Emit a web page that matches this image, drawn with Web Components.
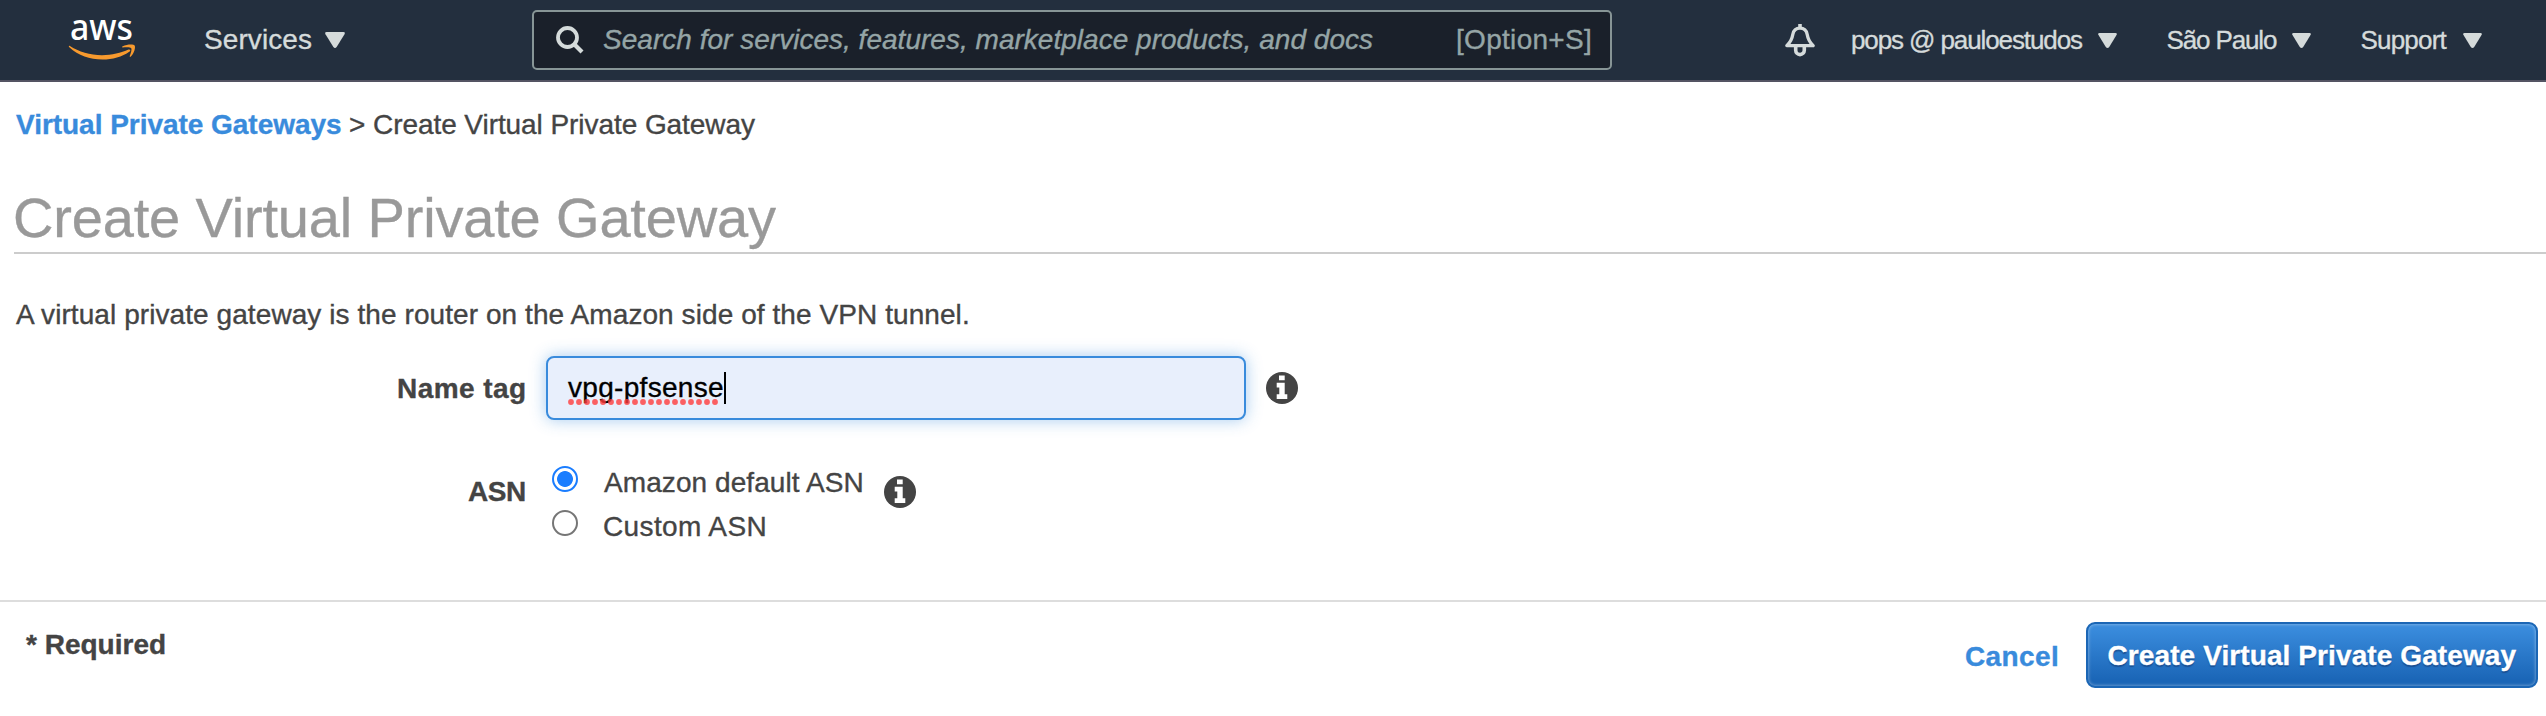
<!DOCTYPE html>
<html lang="en">
<head>
<meta charset="utf-8">
<title>Create Virtual Private Gateway</title>
<style>
html,body{margin:0;padding:0}
body{background:#fff;color:#444;font-family:"Liberation Sans",Arial,sans-serif;font-size:28px;overflow:hidden}
</style>
</head>
<body>
<vpc-page></vpc-page>
<script>
const pen = document.createElement('canvas').getContext('2d');

/* One line of text whose box is exactly its ink width; tracking is derived from the width. */
class InkText extends HTMLElement {
  connectedCallback() {
    const size = +(this.getAttribute('size') || 28);
    const weight = this.getAttribute('weight') || '400';
    const slant = this.hasAttribute('italic') ? 'italic' : 'normal';
    const width = +this.getAttribute('w');
    const text = this.textContent;
    pen.font = `${slant} ${weight} ${size}px "Liberation Sans", Arial, sans-serif`;
    const m = pen.measureText(text);
    const ink = m.actualBoundingBoxRight + m.actualBoundingBoxLeft;
    const track = text.length > 1 ? (width - ink) / (text.length - 1) : 0;
    this.attachShadow({mode: 'open'}).innerHTML = `
      <style>
        :host{display:block;flex:none;width:${width}px;-webkit-text-stroke:.35px currentColor;
          font:${slant} ${weight} ${size}px/${Math.round(size * 8 / 7)}px "Liberation Sans",Arial,sans-serif}
        span{display:block;white-space:pre;margin-left:${m.actualBoundingBoxLeft}px;letter-spacing:${track}px}
      </style><span><slot></slot></span>`;
  }
}
customElements.define('ink-text', InkText);

const define = (name, html) => customElements.define(name, class extends HTMLElement {
  constructor() {
    super();
    this.attachShadow({mode: 'open'}).innerHTML = html;
  }
});

define('caret-down', `
  <style>:host{display:block;flex:none;width:20px;height:16px}svg{display:block;width:100%;height:100%}</style>
  <svg viewBox="0 0 20 16" preserveAspectRatio="none"><path d="M1.6 0H18.4Q20.6 0 19.5 2.2L11.8 14.8Q10 17.2 8.200 14.800L.5 2.200Q-.6 0 1.600 0Z" fill="#d5dbdb"/></svg>`);

define('aws-logo', `
  <style>:host{display:block;flex:none;width:68px;height:42px}svg{display:block;overflow:visible}</style>
  <svg width="68" height="42" viewBox="0 0 68 42">
    <text x="1" y="20.700" font-family="Noto Sans,sans-serif" font-weight="500" font-size="37" textLength="63" lengthAdjust="spacingAndGlyphs" fill="#fff">aws</text>
    <path d="M.5 26.800C10 33 21 36.200 33 36.200C43 36.200 52 34 59.500 30.600C61 30 62 31.600 60.600 32.600C53 38 43.500 40.600 33.500 40.600C20.500 40.600 9.500 36.500 .3 28.300C-.5 27.500-.2 26.500 .5 26.800Z" fill="#f79a2e"/>
    <path d="M53.600 28.600C52.900 28.400 53 27.700 53.700 27.300C57.800 25.200 64.500 25.100 65.600 26.400C66.800 27.900 65.300 34.200 61.800 37.600C61.200 38.200 60.400 37.900 60.700 37.100C61.700 34.600 63.100 30.300 62.200 29.200C61.300 28 56.200 28.400 53.600 28.600Z" fill="#f79a2e"/>
  </svg>`);

define('search-box', `
  <style>
    :host{box-sizing:border-box;display:flex;align-items:center;flex:none;width:1080px;height:60px;border:2px solid #879596;
      border-radius:5px;background:#1a202a;color:#95a5a6;padding:0 20px 0 22px}
    svg{display:block;margin-right:19px}
    .key{margin-left:auto}
  </style>
  <svg width="28" height="28" viewBox="0 0 28 28" fill="none" stroke="#d5dbdb"><circle cx="11.500" cy="11.500" r="9.500" stroke-width="3.800"/><path d="M18.500 18.500L26 26" stroke-width="4.200"/></svg>
  <ink-text italic w="770">Search for services, features, marketplace products, and docs</ink-text>
  <ink-text class="key" w="132">[Option+S]</ink-text>`);

define('console-header', `
  <style>
    :host{box-sizing:border-box;display:flex;align-items:center;height:82px;background:#232f3e;border-bottom:2px solid #545463;color:#d5dbdb;padding-left:69px}
    aws-logo{margin-right:68px}
    .services{margin-right:187px}
    .item{display:flex;align-items:center;gap:14px}
    .services caret-down{margin-top:-1px}
    .bell{display:block;flex:none;margin:0 36px 0 172px}
    .small{gap:15px}
    .small ink-text{margin-top:-1px}
    .small caret-down{width:19px;height:15px}
    .small+.small{margin-left:50.500px}
  </style>
  <aws-logo></aws-logo>
  <div class="item services"><ink-text w="106">Services</ink-text><caret-down></caret-down></div>
  <search-box></search-box>
  <svg class="bell" width="32" height="33" viewBox="0 0 32 33" fill="none" stroke="#d5dbdb"><path d="M16 0V4" stroke-width="3.600"/><path d="M2.800 21.600C6.500 18.200 8.200 14.200 8.800 10.500C9.600 6 12.300 4.200 16 4.200S22.400 6 23.200 10.500C23.800 14.200 25.500 18.200 29.200 21.600Z" stroke-width="3.300" stroke-linejoin="round"/><path d="M11.700 22.500V26.300A4.300 4.300 0 0 0 20.300 26.300V22.500" stroke-width="3.600"/></svg>
  <div class="item small"><ink-text size="26" w="231">pops @ pauloestudos</ink-text><caret-down></caret-down></div>
  <div class="item small"><ink-text size="26" w="109.500">São Paulo</ink-text><caret-down></caret-down></div>
  <div class="item small"><ink-text size="26" w="86">Support</ink-text><caret-down></caret-down></div>`);

define('info-icon', `
  <style>:host{display:block;flex:none;width:32px;height:32px}svg{display:block}</style>
  <svg width="32" height="32" viewBox="0 0 32 32"><circle cx="16" cy="16" r="16" fill="#444"/><path d="M13 3.500H18.700V8.300H13ZM10.700 10.800H18.700V22.300H21.300V27H10.700V22.300H13.300V15.500H10.700Z" fill="#fff"/></svg>`);

define('name-field', `
  <style>
    :host{box-sizing:border-box;display:flex;align-items:center;flex:none;width:700px;height:64px;border:2px solid #398bdc;border-radius:8px;
      background:#e8effc;color:#000;padding-left:20px;box-shadow:0 0 16px rgba(57,139,220,.45)}
    .word{position:relative}
    .dots{position:absolute;left:0;top:27px;display:block}
    .caret{width:2px;height:32px;background:#000;margin-left:1px}
  </style>
  <div class="word"><ink-text w="155">vpg-pfsense</ink-text>
    <svg class="dots" width="152" height="6" viewBox="0 0 152 6"><path d="M3 3H148" stroke="#ff3b3b" stroke-opacity=".8" stroke-width="5.800" stroke-linecap="round" stroke-dasharray="0 8"/></svg></div>
  <div class="caret"></div>`);

define('radio-option', `
  <style>
    :host{display:flex;height:44px}
    i{box-sizing:border-box;display:block;flex:none;width:26px;height:26px;border-radius:50%;border:2px solid #767676;margin:0 26px 0 6px}
    :host([checked]) i{border-color:#1a7dff;background:radial-gradient(circle,#1a7dff 7.500px,#fff 8.300px)}
    ::slotted(*){margin-top:1px}
  </style><i></i><slot></slot>`);

define('primary-button', `
  <style>:host{box-sizing:border-box;display:flex;justify-content:center;align-items:center;width:452px;height:66px;padding:2px 0 0 1px;border:2px solid #1b66b5;border-radius:9px;
    background:linear-gradient(#398bdc 8%,#1b66b7 90%);color:#fff;text-shadow:0 2px 1px rgba(20,60,120,.6);box-shadow:inset 0 0 3px 1px rgba(255,255,255,.3)}
  </style><slot></slot>`);

define('vpc-page', `
  <style>
    :host{display:flex;flex-direction:column;height:716px}
    .crumbs{display:flex;padding:27px 0 0 16px;color:#444}
    .crumbs .link,.cancel{color:#398bdc}
    .gt{margin:0 9px 0 9px}
    .title{margin-left:14px;padding:46px 0 0 1px;height:65px;border-bottom:2px solid #ccc;color:#999}
    .title ink-text{margin-top:-1px}
    .intro{padding:45px 0 0 16px}
    .row{display:flex}
    .name{margin-top:25px;height:64px;align-items:center}
    .asn{margin-top:46px;height:88px}
    .label{width:525px;margin-right:21px;display:flex;justify-content:flex-end;flex:none}
    .asn .label{padding-top:10px}
    .name .label{padding-top:1px}
    .name info-icon{margin-left:20px}
    .asn info-icon{margin:10px 0 0 21px}
    footer{display:flex;align-items:flex-start;border-top:2px solid #ddd;margin-top:46px;padding:20px 8px 0 26px}
    footer .req{margin-top:7px}
    footer .cancel{margin:19px 29px 0 auto}
  </style>
  <console-header></console-header>
  <div class="crumbs"><ink-text class="link" weight="700" w="325">Virtual Private Gateways</ink-text><ink-text class="gt" w="15">></ink-text><ink-text w="381">Create Virtual Private Gateway</ink-text></div>
  <div class="title"><ink-text size="56" w="761">Create Virtual Private Gateway</ink-text></div>
  <div class="intro"><ink-text w="955">A virtual private gateway is the router on the Amazon side of the VPN tunnel.</ink-text></div>
  <div class="row name"><div class="label"><ink-text weight="700" w="127">Name tag</ink-text></div><name-field></name-field><info-icon></info-icon></div>
  <div class="row asn"><div class="label"><ink-text weight="700" w="57">ASN</ink-text></div>
    <div><radio-option checked><ink-text w="259">Amazon default ASN</ink-text></radio-option><radio-option><ink-text w="162">Custom ASN</ink-text></radio-option></div>
    <info-icon></info-icon></div>
  <footer><ink-text class="req" weight="700" w="139">* Required</ink-text><ink-text class="cancel" weight="700" w="91">Cancel</ink-text><primary-button><ink-text weight="700" w="408">Create Virtual Private Gateway</ink-text></primary-button></footer>`);
</script>
</body>
</html>
